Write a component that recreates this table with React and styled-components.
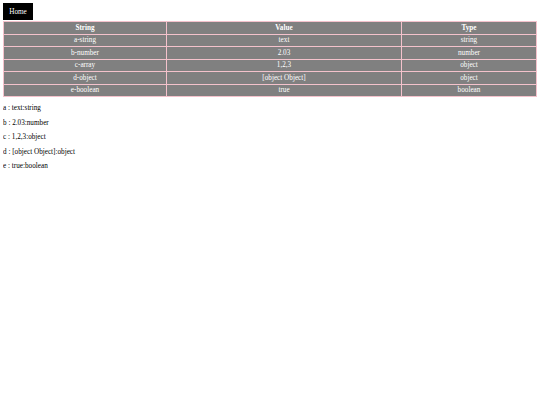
import { createGlobalStyle, styled } from 'styled-components';

const GlobalStyle = createGlobalStyle`
  body {
    margin: 3px;
    font-family: "Liberation Serif", serif;
    font-size: 7.2px;
    color: #000;
    background: #fff;
  }
`;

const rows = [
  { key: 'a-string', value: 'text' },
  { key: 'b-number', value: 2.03 },
  { key: 'c-array', value: [1, 2, 3] },
  { key: 'd-object', value: {} },
  { key: 'e-boolean', value: true },
];

const App = () => {
  return (
    <>
      <GlobalStyle />
      <HomeButton>Home</HomeButton>
      <StTable>
        <colgroup>
          <col style={{ width: '163px' }} />
          <col style={{ width: '235px' }} />
          <col />
        </colgroup>
        <thead>
          <tr>
            <StHead>String</StHead>
            <StHead>Value</StHead>
            <StHead>Type</StHead>
          </tr>
        </thead>
        <tbody>
          {rows.map((row) => (
            <tr key={row.key}>
              <StCell>{row.key}</StCell>
              <StCell>{String(row.value)}</StCell>
              <StCell>{typeof row.value}</StCell>
            </tr>
          ))}
        </tbody>
      </StTable>
      <StList>
        {rows.map((row) => (
          <StLine key={row.key}>
            {row.key[0]} : {String(row.value)}:{typeof row.value}
          </StLine>
        ))}
      </StList>
    </>
  );
};

const HomeButton = styled.button`
  display: block;
  width: 30px;
  height: 17px;
  padding: 0;
  border: none;
  background: #000;
  color: #fff;
  font-family: "Liberation Serif", serif;
  font-size: 7.2px;
`;

const StTable = styled.table`
  width: 534px;
  border-collapse: collapse;
  table-layout: fixed;
  margin-top: 1px;
`;

const StHead = styled.th`
  height: 11.5px;
  padding: 0;
  border: 1.5px solid #f4c2cc;
  background: #808080;
  color: #fff;
  font-weight: 700;
  text-align: center;
`;

const StCell = styled.td`
  height: 11.5px;
  padding: 0;
  border: 1.5px solid #f4c2cc;
  background: #808080;
  color: #fff;
  text-align: center;
`;

const StList = styled.div`
  padding-top: 4px;
`;

const StLine = styled.p`
  margin: 0;
  height: 14.5px;
  line-height: 14.5px;
`;

export default App;
